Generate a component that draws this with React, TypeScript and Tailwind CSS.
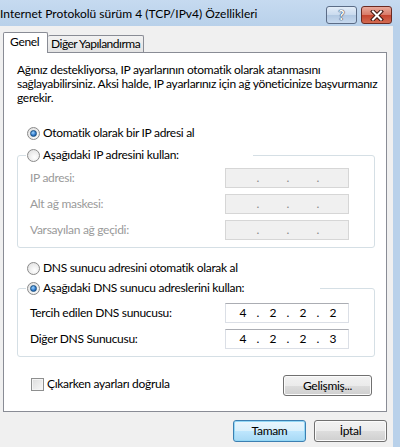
import React from "react";

const font = { fontFamily: "Lato, sans-serif" };

function Radio({ checked }: { checked?: boolean }) {
  return (
    <span className="relative inline-flex h-[13px] w-[13px] shrink-0 items-center justify-center rounded-full border border-[#8a8a8a] bg-[radial-gradient(circle_at_60%_65%,#ffffff,#dcdcdc)]">
      {checked && (
        <span className="h-[7px] w-[7px] rounded-full border border-[#1c5180] bg-[radial-gradient(circle_at_40%_35%,#9fd6ff,#2b74c8_60%,#114a8a)]" />
      )}
    </span>
  );
}

function RadioRow({ checked, label }: { checked?: boolean; label: string }) {
  return (
    <span className="flex h-[16px] items-center gap-[3px] whitespace-nowrap bg-white px-[1px] text-[12px] leading-[16px] text-black">
      <Radio checked={checked} />
      {label}
    </span>
  );
}

function IpBox({ value, disabled }: { value?: string[]; disabled?: boolean }) {
  const parts = value ?? ["", "", "", ""];
  return (
    <div
      className={`flex h-[20px] w-[124px] items-center border pl-[6px] text-[12px] tracking-normal ${
        disabled
          ? "border-[#d6d6d6] bg-[#f0f0f0] text-[#8a8a8a]"
          : "border-[#dbdfe6] border-t-[#abadb3] bg-white text-black"
      }`}
    >
      {parts.map((p, i) => (
        <React.Fragment key={i}>
          <span className="w-[22px] text-center leading-[18px]">{p}</span>
          {i < 3 && <span className="w-[8px] text-center leading-[18px]">.</span>}
        </React.Fragment>
      ))}
    </div>
  );
}

function FieldRow({ label, value, disabled }: { label: string; value?: string[]; disabled?: boolean }) {
  return (
    <div className="flex h-[20px] items-center">
      <span className={`w-[207px] pl-[12px] text-[12px] whitespace-nowrap ${disabled ? "text-[#9a9a9a]" : "text-black"}`}>
        {label}
      </span>
      <IpBox value={value} disabled={disabled} />
    </div>
  );
}

function Button({ children, primary, className }: { children: React.ReactNode; primary?: boolean; className?: string }) {
  return (
    <div
      className={`flex items-center justify-center rounded-[3px] border text-[12px] text-black ${
        primary
          ? "border-[#3c7fb1] bg-[linear-gradient(#eaf6fd_0%,#d9f0fc_50%,#bee6fd_51%,#a7d9f5_100%)] shadow-[inset_0_0_0_1px_#94d8f6]"
          : "border-[#707070] bg-[linear-gradient(#f2f2f2_0%,#ebebeb_50%,#dddddd_51%,#cfcfcf_100%)] shadow-[inset_0_0_0_1px_#fbfbfb]"
      } ${className ?? ""}`}
    >
      {children}
    </div>
  );
}

export default function App() {
  return (
    <div className="flex h-[447px] w-[400px] flex-col overflow-hidden bg-[#b9d1ea]" style={font}>
      {/* title bar */}
      <div className="flex h-[26px] shrink-0 items-start bg-[linear-gradient(#c6daf0,#b9d1ea)]">
        <span className="mt-[6px] whitespace-nowrap text-[12px] leading-[16px] text-black">
          Internet Protokolü sürüm 4 (TCP/IPv4) Özellikleri
        </span>
        <div className="ml-auto mr-[8px] mt-[6px] flex gap-[4px]">
          <div className="flex h-[18px] w-[31px] items-center justify-center rounded-[3px] border border-[#5b6c86] bg-[linear-gradient(#e3edf8_0%,#c9daee_50%,#b1c8e2_51%,#c7d9ee_100%)]">
            <span
              className="text-[13px] font-bold leading-none text-white"
              style={{ textShadow: "0 0 1px #2d3e58, 0 0 1px #2d3e58, 0 0 1px #2d3e58" }}
            >
              ?
            </span>
          </div>
          <div className="flex h-[18px] w-[31px] items-center justify-center rounded-[3px] border border-[#6a2a22] bg-[linear-gradient(#e9a99b_0%,#d87a68_50%,#c5442f_51%,#d36b52_100%)]">
            <svg width="14" height="11" viewBox="0 0 14 11">
              <path d="M3 1.5 L11 9.5 M11 1.5 L3 9.5" stroke="#3b1510" strokeWidth="4" strokeLinecap="square" />
              <path d="M3 1.5 L11 9.5 M11 1.5 L3 9.5" stroke="#ffffff" strokeWidth="2" strokeLinecap="square" />
            </svg>
          </div>
        </div>
      </div>

      <div className="flex flex-1 tracking-[-0.3px]">
        {/* body */}
        <div className="flex w-[393px] flex-col bg-[#f0f0f0] pl-[3px] pt-[6px]">
          {/* tabs */}
          <div className="relative z-10 -mb-px flex h-[21px] items-start">
            <div className="h-[21px] w-[45px] whitespace-nowrap rounded-t-[2px] border border-b-0 border-[#898c95] bg-white pl-[6px] text-[12px] leading-[18px] text-black">
              Genel
            </div>
            <div className="mt-[3px] h-[17px] w-[96px] whitespace-nowrap rounded-t-[2px] border border-l-0 border-b-0 border-[#898c95] bg-[linear-gradient(#f2f2f2,#e3e3e3)] pl-[3px] text-[12px] leading-[16px] tracking-[-0.5px] text-black">
              Diğer Yapılandırma
            </div>
          </div>

          {/* panel */}
          <div className="flex h-[360px] w-[384px] flex-col border border-[#898c95] bg-white">
            <p className="ml-[13px] mt-[10px] whitespace-nowrap text-[12px] leading-[14px] text-black">
              Ağınız destekliyorsa, IP ayarlarının otomatik olarak atanmasını
              <br />
              sağlayabilirsiniz. Aksi halde, IP ayarlarınız için ağ yöneticinize başvurmanız
              <br />
              gerekir.
            </p>

            <div className="ml-[22px] mt-[20px]">
              <RadioRow checked label="Otomatik olarak bir IP adresi al" />
            </div>

            <fieldset className="ml-[13px] mt-[6px] w-[358px] rounded-[3px] border border-[#d5dfe5] pb-[7px]">
              <legend className="ml-[8px] w-[227px]">
                <RadioRow label="Aşağıdaki IP adresini kullan:" />
              </legend>
              <div className="mt-[5px] flex flex-col gap-[6px]">
                <FieldRow disabled label="IP adresi:" />
                <FieldRow disabled label="Alt ağ maskesi:" />
                <FieldRow disabled label="Varsayılan ağ geçidi:" />
              </div>
            </fieldset>

            <div className="ml-[22px] mt-[12px]">
              <RadioRow label="DNS sunucu adresini otomatik olarak al" />
            </div>

            <fieldset className="ml-[13px] mt-[4px] w-[358px] rounded-[3px] border border-[#d5dfe5] pb-[7px]">
              <legend className="ml-[8px] w-[294px]">
                <RadioRow checked label="Aşağıdaki DNS sunucu adreslerini kullan:" />
              </legend>
              <div className="mt-[7px] flex flex-col gap-[6px]">
                <FieldRow label="Tercih edilen DNS sunucusu:" value={["4", "2", "2", "2"]} />
                <FieldRow label="Diğer DNS Sunucusu:" value={["4", "2", "2", "3"]} />
              </div>
            </fieldset>

            <div className="mt-[18px] flex items-start">
              <div className="ml-[27px] mt-[1px] flex items-center gap-[3px] text-[12px] leading-[16px] text-black">
                <span className="h-[13px] w-[13px] border border-[#8e8f8f] bg-[linear-gradient(135deg,#dcdcdc,#f8f8f8)] shadow-[inset_0_0_0_1px_#f4f4f4]" />
                <span>Çıkarken ayarları doğrula</span>
              </div>
              <Button className="ml-auto mr-[14px] h-[21px] w-[89px]">Gelişmiş...</Button>
            </div>
          </div>

          {/* footer buttons */}
          <div className="mt-[8px] flex gap-[8px] pl-[230px]">
            <Button primary className="h-[22px] w-[73px]">
              Tamam
            </Button>
            <Button className="h-[22px] w-[73px]">İptal</Button>
          </div>
        </div>
        <div className="flex-1 bg-[#b9d1ea]" />
      </div>
    </div>
  );
}
